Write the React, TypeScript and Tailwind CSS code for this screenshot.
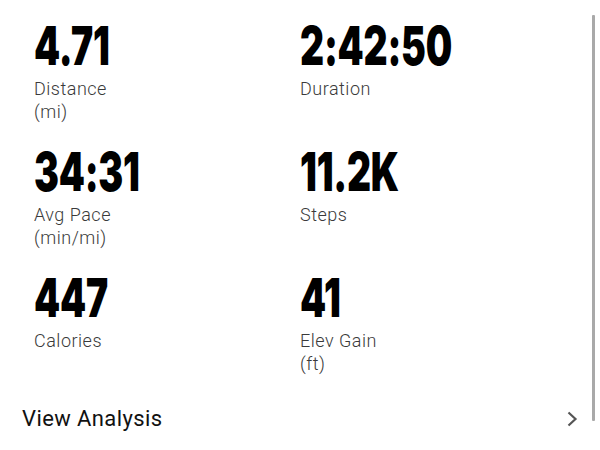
import React from "react";

const stats = [
  { value: "4.71", label: "Distance", unit: "(mi)" },
  { value: "2:42:50", label: "Duration", unit: "" },
  { value: "34:31", label: "Avg Pace", unit: "(min/mi)" },
  { value: "11.2K", label: "Steps", unit: "" },
  { value: "447", label: "Calories", unit: "" },
  { value: "41", label: "Elev Gain", unit: "(ft)" },
];

export default function App() {
  return (
    <div className="relative w-[600px] h-[450px] bg-white overflow-hidden">
      <div className="pt-[19px] pl-[34px]">
        <div className="grid grid-cols-[266px_266px] gap-y-[22px]">
          {stats.map((s) => (
            <div key={s.value} className="h-[104px] flex flex-col">
              <div
                className="h-[54px] text-[54px] leading-none font-black text-black whitespace-nowrap"
                style={{ fontFamily: "Inter, sans-serif" }}
              >
                <span className="inline-block origin-left scale-x-[0.69] tracking-[-0.3px]">{s.value}</span>
              </div>
              <div
                className="mt-[4px] text-[18px] leading-[23px] font-light text-[#3a3a3a] tracking-[0.5px]"
                style={{ fontFamily: "Roboto, sans-serif" }}
              >
                <div>{s.label}</div>
                {s.unit && <div>{s.unit}</div>}
              </div>
            </div>
          ))}
        </div>
      </div>
      <div className="mt-[30px] pl-[22px] pr-[22px] flex items-center justify-between h-[28px]">
        <span
          className="text-[22px] leading-[28px] text-[#111] tracking-[0.4px]"
          style={{ fontFamily: "Roboto, sans-serif" }}
        >
          View Analysis
        </span>
        <svg width="12" height="16" viewBox="0 0 12 16">
          <path d="M2.5 1.5 L9.5 8 L2.5 14.5" fill="none" stroke="#555" strokeWidth="2.2" />
        </svg>
      </div>
      <div className="absolute left-[592px] top-[15px] w-[3px] h-[406px] bg-[#a9a9a9] rounded-[1px]" />
    </div>
  );
}
